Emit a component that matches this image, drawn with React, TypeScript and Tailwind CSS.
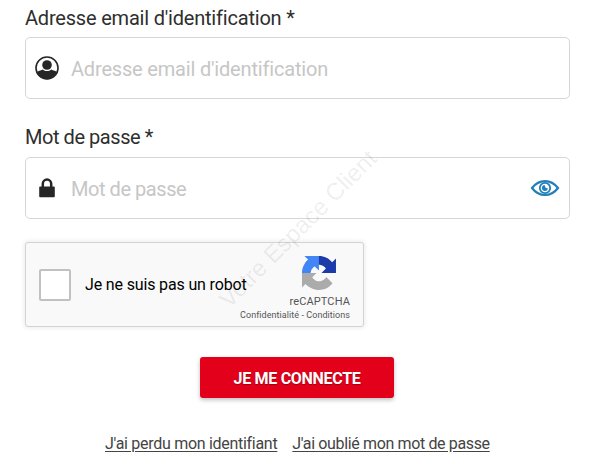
import React from "react";

function UserIcon() {
  return (
    <svg viewBox="0 0 24 24" className="h-6 w-6" fill="none">
      <circle cx="12" cy="12" r="11" stroke="#262626" strokeWidth="1.6" />
      <circle cx="12" cy="9" r="4.8" fill="#262626" />
      <path
        d="M1.800 15.800c1.600-.5 3.600-1.100 6-2.200 1.200 1 2.600 1.500 4.200 1.500s3-.5 4.200-1.500c2.400 1.100 4.400 1.700 6 2.200C20.800 20.400 16.800 23.200 12 23.200S3.200 20.400 1.800 15.800z"
        fill="#262626"
      />
    </svg>
  );
}

function LockIcon() {
  return (
    <svg viewBox="0 0 16 20" className="h-5 w-4" fill="none">
      <path d="M3.800 9.500V5.800a4.200 4.200 0 0 1 8.400 0V9.500" stroke="#262626" strokeWidth="2.500" />
      <rect x="0.200" y="8.500" width="15.600" height="10.700" rx="1" fill="#262626" />
    </svg>
  );
}

function EyeIcon() {
  return (
    <svg viewBox="0 0 30 18" className="h-[18px] w-[30px]" fill="none" stroke="#2380b8">
      <path d="M2 9C9 -0.300 21 -0.300 28 9C21 18.300 9 18.300 2 9z" strokeWidth="2.200" />
      <circle cx="15" cy="9" r="5.200" strokeWidth="1.800" />
      <path d="M14.600 6a3 3 0 1 0 3.300 3.400l-2.300-.6z" fill="#2380b8" stroke="none" />
    </svg>
  );
}

function RecaptchaLogo() {
  return (
    <svg viewBox="0 0 64 64" className="h-[34px] w-[34px]">
      <path
        fill="#1c3aa9"
        d="M64 31.955l-.033-1.370V4.687l-7.160 7.160C50.948 4.674 42.033.093 32.050.093c-10.400 0-19.622 4.960-25.458 12.640l11.736 11.860a15.550 15.550 0 0 1 4.754-5.334c2.050-1.600 4.952-2.906 8.968-2.906.485 0 .86.057 1.135.163 4.976.393 9.288 3.140 11.828 7.124l-8.307 8.307L64 31.953"
      />
      <path
        fill="#4285f4"
        d="M31.862.094l-1.370.033H4.594l7.160 7.160C4.580 13.147 0 22.060 0 32.046c0 10.400 4.960 19.622 12.640 25.458L24.500 45.768a15.550 15.550 0 0 1-5.334-4.754c-1.600-2.050-2.906-4.952-2.906-8.968 0-.485.057-.86.163-1.135.393-4.976 3.140-9.288 7.124-11.828l8.307 8.307L31.860.095"
      />
      <path
        fill="#ababab"
        d="M.001 32.045l.033 1.370v25.898l7.160-7.160c5.860 7.173 14.774 11.754 24.760 11.754 10.400 0 19.622-4.960 25.458-12.640l-11.736-11.860a15.550 15.550 0 0 1-4.754 5.334c-2.050 1.600-4.952 2.906-8.968 2.906-.485 0-.86-.057-1.135-.163-4.976-.393-9.288-3.140-11.828-7.124l8.307-8.307c-10.522.04-22.400.066-27.295-.005"
      />
    </svg>
  );
}

function Field({
  label,
  input,
  icon,
  action,
}: {
  label: React.ReactNode;
  input: React.ReactNode;
  icon: React.ReactNode;
  action?: React.ReactNode;
}) {
  return (
    <label className="block h-[120px]">
      <span className="flex h-9 items-center text-[20px] text-[#2e2e2e]">{label}</span>
      <span className="mt-px flex h-[62px] items-center rounded-[5px] border border-[#d6d6d6] bg-white px-[9px]">
        <span className="mb-px flex w-6 justify-center">{icon}</span>
        {input}
        {action}
      </span>
    </label>
  );
}

export default function App() {
  return (
    <main className="relative h-[464px] w-[600px] overflow-hidden bg-white font-[Roboto,sans-serif]">
      <form className="pl-[25px]" onSubmit={(e) => e.preventDefault()}>
        <div className="w-[545px]">
          <Field
            label={<span className="tracking-[-0.2px]">Adresse email d'identification *</span>}
            input={
              <input
                type="email"
                placeholder="Adresse email d'identification"
                className="mt-px ml-3 h-10 min-w-0 flex-1 text-[20px] tracking-[-0.18px] outline-none placeholder:text-[#c6c6c6]"
              />
            }
            icon={<UserIcon />}
          />
          <Field
            label={<span className="mb-0.5 tracking-[-0.45px]">Mot de passe *</span>}
            input={
              <input
                type="password"
                placeholder="Mot de passe"
                className="mt-px ml-3 h-10 min-w-0 flex-1 text-[20px] tracking-[-0.45px] outline-none placeholder:text-[#c6c6c6]"
              />
            }
            icon={<LockIcon />}
            action={
              <button type="button" className="mb-px" aria-label="Afficher le mot de passe">
                <EyeIcon />
              </button>
            }
          />
        </div>

        <div className="mt-0.5 flex h-[85px] w-[339px] rounded-[3px] border border-[#d3d3d3] bg-[#f9f9f9] shadow-[0_0_4px_1px_rgba(0,0,0,0.08)]">
          <div className="flex min-w-0 flex-1 items-center pl-[13px]">
            <span className="h-8 w-8 shrink-0 rounded-[2px] border-2 border-[#c1c1c1] bg-white" />
            <span className="ml-3.5 text-[16px] tracking-[-0.15px] whitespace-nowrap text-black">
              Je ne suis pas un robot
            </span>
          </div>
          <div className="flex w-[112px] shrink-0 flex-col items-end pt-[13px] pr-[13px] text-[#555]">
            <span className="mr-[14px] h-[34px]">
              <RecaptchaLogo />
            </span>
            <span className="mt-1 text-[11px] leading-[15px] tracking-[0.12px]">reCAPTCHA</span>
            <span className="text-[9px] leading-3 tracking-[0.06px] whitespace-nowrap">
              Confidentialité - Conditions
            </span>
          </div>
        </div>
      </form>

      <div className="mt-[30px] flex justify-center pr-[6px]">
        <button className="h-[41px] w-[194px] rounded-[3px] bg-[#e2001a] pt-[3px] text-[16px] font-bold tracking-[-0.3px] text-white shadow-[0_2px_4px_rgba(0,0,0,0.25)] text-shadow-[0_1px_1px_rgba(0,0,0,0.3)]">
          JE ME CONNECTE
        </button>
      </div>

      <nav className="mt-[34px] flex gap-[15px] pl-[105px] text-[16px] text-[#444]">
        <a href="#" className="tracking-[-0.29px] whitespace-nowrap underline underline-offset-2">
          J'ai perdu mon identifiant
        </a>
        <a href="#" className="tracking-[-0.36px] whitespace-nowrap underline underline-offset-2">
          J'ai oublié mon mot de passe
        </a>
      </nav>

      <span className="pointer-events-none absolute top-[229px] left-[298px] -translate-x-1/2 -translate-y-1/2 -rotate-45 font-['Liberation_Sans',sans-serif] text-[24px] whitespace-nowrap text-black/8">
        Votre Espace Client
      </span>
    </main>
  );
}
